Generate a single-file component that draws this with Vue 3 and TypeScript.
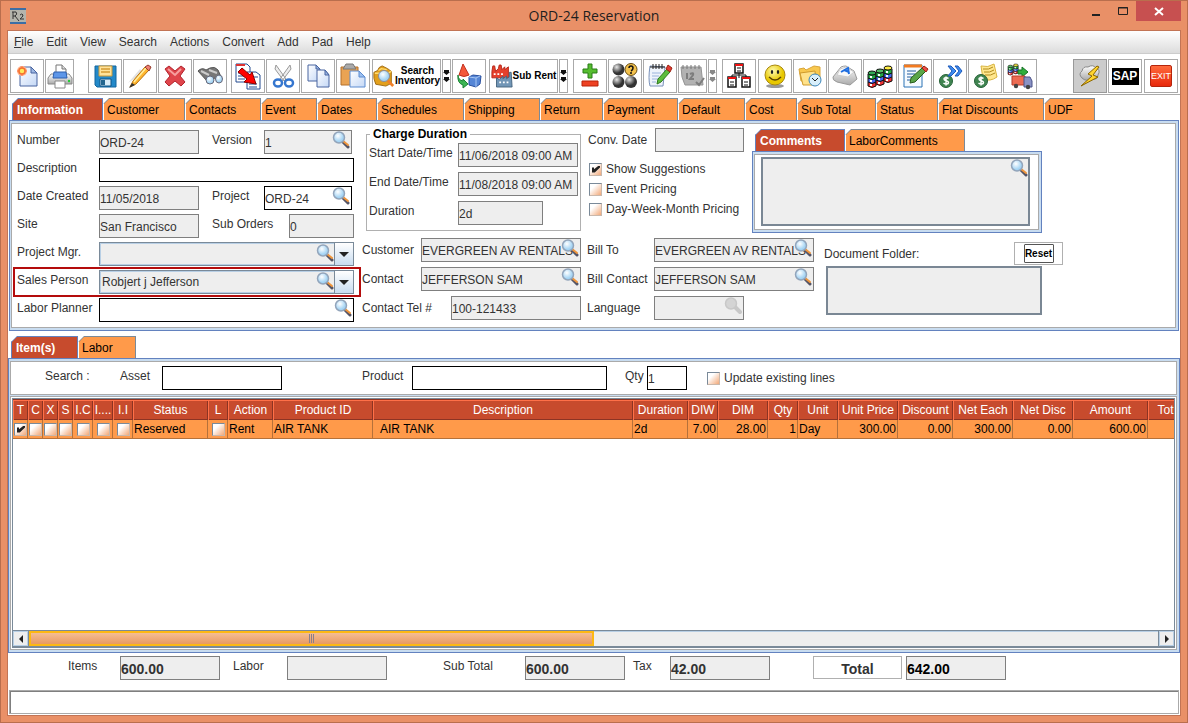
<script setup lang="ts">
import { reactive, ref } from 'vue'

interface Tab { label: string; width: number }
interface Tool { name: string; title: string; size?: string; lead?: number; caption?: string[] }
interface Column { title: string; width: number; kind?: 'check' | 'num' | 'text'; value?: string | boolean }

const menus = ['File', 'Edit', 'View', 'Search', 'Actions', 'Convert', 'Add', 'Pad', 'Help']

const tabs: Tab[] = [
  { label: 'Information', width: 91 }, { label: 'Customer', width: 82 }, { label: 'Contacts', width: 76 },
  { label: 'Event', width: 56 }, { label: 'Dates', width: 60 }, { label: 'Schedules', width: 87 },
  { label: 'Shipping', width: 76 }, { label: 'Return', width: 63 }, { label: 'Payment', width: 75 },
  { label: 'Default', width: 67 }, { label: 'Cost', width: 52 }, { label: 'Sub Total', width: 79 },
  { label: 'Status', width: 62 }, { label: 'Flat Discounts', width: 106 }, { label: 'UDF', width: 51 },
]
const commentTabs: Tab[] = [{ label: 'Comments', width: 90 }, { label: 'LaborComments', width: 120 }]
const lineTabs: Tab[] = [{ label: 'Item(s)', width: 67 }, { label: 'Labor', width: 58 }]
const activeTab = ref('Information')
const activeComment = ref('Comments')
const activeLine = ref('Item(s)')

const order = reactive({
  number: 'ORD-24', version: '1', description: '', created: '11/05/2018', project: 'ORD-24',
  site: 'San Francisco', subOrders: '0', manager: '', sales: 'Robjert j Jefferson', planner: '',
  start: '11/06/2018 09:00 AM', end: '11/08/2018 09:00 AM', duration: '2d', convDate: '',
  suggestions: true, eventPricing: false, dwmPricing: false,
  customer: 'EVERGREEN AV RENTALS', contact: 'JEFFERSON SAM', tel: '100-121433',
  billTo: 'EVERGREEN AV RENTALS', billContact: 'JEFFERSON SAM', language: '',
  comments: '', folder: '', asset: '', product: '', qty: '1', updateLines: false,
  items: '600.00', labor: '', subTotal: '600.00', tax: '42.00', total: '642.00',
})

const columns = reactive<Column[]>([
  { title: 'T', width: 15, kind: 'check', value: true }, { title: 'C', width: 15, kind: 'check', value: false },
  { title: 'X', width: 15, kind: 'check', value: false }, { title: 'S', width: 15, kind: 'check', value: false },
  { title: 'I.C', width: 20, kind: 'check', value: false }, { title: 'I....', width: 20, kind: 'check', value: false },
  { title: 'I.I', width: 20, kind: 'check', value: false }, { title: 'Status', width: 75, value: 'Reserved' },
  { title: 'L', width: 20, kind: 'check', value: false }, { title: 'Action', width: 45, value: 'Rent' },
  { title: 'Product ID', width: 100, value: 'AIR TANK' }, { title: 'Description', width: 260, value: '\u00a0 AIR TANK' },
  { title: 'Duration', width: 55, value: '2d' }, { title: 'DIW', width: 30, kind: 'num', value: '7.00' },
  { title: 'DIM', width: 50, kind: 'num', value: '28.00' }, { title: 'Qty', width: 30, kind: 'num', value: '1' },
  { title: 'Unit', width: 40, value: 'Day' }, { title: 'Unit Price', width: 60, kind: 'num', value: '300.00' },
  { title: 'Discount', width: 55, kind: 'num', value: '0.00' }, { title: 'Net Each', width: 60, kind: 'num', value: '300.00' },
  { title: 'Net Disc', width: 60, kind: 'num', value: '0.00' }, { title: 'Amount', width: 75, kind: 'num', value: '600.00' },
  { title: 'Tot', width: 35, value: '' },
])

const tools: Tool[] = [
  { name: 'new', title: 'New' }, { name: 'print', title: 'Print', size: 'narrow' },
  { name: 'save', title: 'Save', lead: 13 }, { name: 'pencil', title: 'Edit' }, { name: 'cross', title: 'Delete' },
  { name: 'binoculars', title: 'Find' }, { name: 'transfer', title: 'Convert', lead: 3 }, { name: 'cut', title: 'Cut' },
  { name: 'copy', title: 'Copy' }, { name: 'paste', title: 'Paste' },
  { name: 'box', title: 'Search Inventory', size: 'wide', lead: 1, caption: ['Search', 'Inventory'] },
  { name: 'more', title: 'More inventory', size: 'slim' }, { name: 'shapes', title: 'Substitute' },
  { name: 'factory', title: 'Sub Rent', size: 'wide', lead: 2, caption: ['Sub Rent'] },
  { name: 'more', title: 'More sub rent', size: 'slim' },
  { name: 'plusminus', title: 'Add or remove', lead: 4 }, { name: 'balls', title: 'Status' }, { name: 'note', title: 'Notes' },
  { name: 'calendar', title: 'Calendar', size: 'narrow' }, { name: 'moregrey', title: 'More dates', size: 'slim' },
  { name: 'tree', title: 'Hierarchy', lead: 4 }, { name: 'smile', title: 'Contact', lead: 1 },
  { name: 'folder', title: 'History' }, { name: 'key', title: 'Keys' }, { name: 'barrels', title: 'Stock' },
  { name: 'form', title: 'Edit form' }, { name: 'payout', title: 'Payment' }, { name: 'bill', title: 'Invoice' },
  { name: 'truck', title: 'Ship' },
]
const endTools: Tool[] = [
  { name: 'flash', title: 'Quick', size: 'pressed' }, { name: 'sap', title: 'SAP' }, { name: 'exit', title: 'Exit', lead: 1 },
]

const barrel = (x: number, y: number, top: string): string =>
  ['#e33', '#46e', '#2a4'].map((c, i) => `<path d="M${x} ${y + 13 - i * 4}v4q4 3 8 0v-4q-4 2-8 0z" fill="${c}" stroke="#111"/><path d="M${x + 3} ${y + 15 - i * 4}v2" stroke="#fff" stroke-width="2"/>`).join('') +
  `<ellipse cx="${x + 4}" cy="${y + 4}" rx="4" ry="2" fill="${top}" stroke="#111"/>`
const coin = '<circle cx="8" cy="17" r="6.500" fill="#3f8450" stroke="#266238"/><path d="M10.500 14.500q-4-2-4.500.5c0 2 4.500 1.500 4.500 3.500s-3 2-5 .6M8 12.500v9" fill="none" stroke="#fff" stroke-width="1.500"/>'

const icons: Record<string, string> = {
  new: '<path d="M5 3h11l6 6v13H5z" fill="url(#gPaper)" stroke="#4864a0"/><path d="M16 3v6h6z" fill="#9db8e4" stroke="#4864a0"/><circle cx="7" cy="7" r="5" fill="#ffb08a"/><path d="M7 2v10M2 7h10" stroke="#ff7a4a"/><circle cx="7" cy="7" r="3" fill="#ffe95a" stroke="#f5702f" stroke-width="1.500"/>',
  print: '<path d="M8 10V1h6l4 4v5" fill="#fff" stroke="#777"/><path d="M14 1v4h4" fill="#ddd" stroke="#777"/><path d="M3 10h18l3 4v6H0v-6z" fill="url(#gSilver)" stroke="#888"/><path d="M6 8h12l1 6H5z" fill="#5d96e8" stroke="#2d5fae"/><path d="M7 17h10v7H7z" fill="#fff" stroke="#888"/><circle cx="21" cy="17" r="1.200" fill="#2c3"/>',
  save: '<path d="M2 2h21v21H4l-2-2z" fill="#2389c9" stroke="#12659d"/><path d="M6 2h13v10H6z" fill="#ffe39a" stroke="#c99a3a"/><path d="M8 5h9M8 8h9" stroke="#d49c34" stroke-width="1.500"/><path d="M7 15h11v7H7z" fill="#d8ecf8" stroke="#0e5283"/><path d="M8 16h4v5H8z" fill="#23668f"/>',
  pencil: '<path d="M0 19L12 5l3 4z" fill="#e2e2e2"/><path d="M2 23l3-6L17 3l4 3L8 20z" fill="#ffb52e" stroke="#b8720f"/><path d="M6 18L18 4" stroke="#fff0a0" stroke-width="1.500"/><path d="M17 3l3-2 3 2-2 4z" fill="#ef7f72" stroke="#953b2d"/><path d="M1 24l3-5 3 2z" fill="#333"/>',
  cross: '<path d="M2 5l4-3 6 5 6-5 4 3-5 7 5 6-4 4-6-5-6 5-4-4 5-6z" fill="#df454b" stroke="#b2232d"/><path d="M5 5l7 6 6-6" fill="none" stroke="#f7a0a0" stroke-width="2"/>',
  binoculars: '<path d="M0 7q4-4 8-1l4-2q5-2 8 2l4 9-10-1-5 3z" fill="#777" stroke="#555"/><path d="M3 7l8 4m0-5l8 3" stroke="#ccc" stroke-width="2"/><ellipse cx="12" cy="16" rx="4" ry="4" fill="url(#gLens)" stroke="#667"/><ellipse cx="21" cy="15" rx="3.500" ry="4" fill="url(#gLens)" stroke="#667"/>',
  transfer: '<path d="M0 0h11l3 3v15H0z" fill="#fff" stroke="#224a90"/><path d="M11 8h9l4 3v14H11z" fill="#fff" stroke="#224a90"/><path d="M0 0h9v2H0z" fill="#d33"/><path d="M2 9h5M2 12h7M2 15h7M13 20h8M13 23h8M18 13h4" stroke="#234d94"/><path d="M2 8l4-4 8 7 2-3 4 12-12-2 3-3z" fill="#f00" stroke="#800"/>',
  cut: '<path d="M5 1l10 14-2 2L4 5zM19 1L9 15l2 2 9-12z" fill="#eee" stroke="#999"/><ellipse cx="7" cy="19" rx="4" ry="3.500" fill="#fff" stroke="#3576cf" stroke-width="2.500"/><ellipse cx="18" cy="19" rx="4" ry="3.500" fill="#fff" stroke="#3576cf" stroke-width="2.500"/>',
  copy: '<path d="M2 1h8l4 4v12H2z" fill="url(#gPaper)" stroke="#4864a0"/><path d="M10 1v4h4z" fill="#9db8e4" stroke="#4864a0"/><path d="M11 6h8l4 5v12H11z" fill="url(#gPaper)" stroke="#4864a0"/><path d="M19 6v5h4z" fill="#9db8e4" stroke="#4864a0"/>',
  paste: '<path d="M0 3h17v18H0z" fill="#e9a353" stroke="#b3702c"/><path d="M5 0h7l3 5H2z" fill="#aaa" stroke="#777"/><path d="M9 7h9l6 6v10H9z" fill="url(#gPaper)" stroke="#5c8cd0"/><path d="M18 7v6h6z" fill="#9dc0f0" stroke="#5c8cd0"/>',
  box: '<path d="M1 8l4-2q1-4 5-5l6 3 4 3v13l-6 3-11-2q-3-6-2-13z" fill="#e2a01c" stroke="#9c6810"/><path d="M2 9h14l4-2M6 6l3-2 6 1" fill="none" stroke="#ffdc70" stroke-width="1.500"/><circle cx="12" cy="12" r="6" fill="url(#gLens)" stroke="#889"/><path d="M16 17l6 6" stroke="#f08028" stroke-width="3"/>',
  factory: '<path d="M1 14V7l1-6h2l1 6 3-3 1-4h2l1 5 3-3v3l4-3v12z" fill="#e6402c" stroke="#b52316"/><path d="M6 24V14l3 2 4-4v3l4-3v3l3-2V8h2l1 16z" fill="#7296b6" stroke="#44627e"/><path d="M9 19h2m2 0h2m2 0h2M3 10h2m2 0h2m2 0h2" stroke="#fff" stroke-width="2"/>',
  shapes: '<path d="M6 0l6 11q-5 3-10 0z" fill="#f4583a" stroke="#c2301e"/><path d="M1 11q0 5 5 6v-2l5 5-5 4v-3q-6-2-5-10z" fill="#3db554" stroke="#1c8234"/><path d="M12 13l4-2 8 1-1 8-4 3-7-2z" fill="#5586d6" stroke="#284f9e"/><path d="M12 13l7 1 4-2m-4 2v9" fill="none" stroke="#a8c6f2"/>',
  plusminus: '<path d="M10 0h4v5h5v4h-5v5h-4V9H5V5h5z" fill="#56bd30" stroke="#287c16"/><path d="M4 17h16v5H4z" fill="#ee4123" stroke="#b92208"/>',
  balls: '<circle cx="5.500" cy="5.500" r="6" fill="url(#gBall)"/><circle cx="18" cy="5.500" r="6" fill="#f4c24c" stroke="#654a12"/><circle cx="5.500" cy="18" r="6" fill="url(#gBall)"/><circle cx="18" cy="18" r="6" fill="url(#gBall)"/><path d="M16 4q0-2 2-2t2 2-2 3m0 1v2" fill="none" stroke="#111" stroke-width="1.500"/>',
  note: '<path d="M2 2l15 1-2 19H2q-2-7 0-20z" fill="#eef3fb" stroke="#7a92ba"/><path d="M2 3h15M5 0v5m3-5v5m3-5v5m3-5v5" stroke="#222"/><path d="M4 9h9M4 12h7M4 15h6M4 18h4" stroke="#9bb4dc"/><path d="M9 20l1-5L19 5l3 3-9 10z" fill="#5cbd3b" stroke="#2e7a1c"/><path d="M18 5l2-4 4 3-2 4z" fill="#e33b33" stroke="#921"/>',
  calendar: '<path d="M0 3h20l2 18H4q-4-7-4-18z" fill="#b2b2b2" stroke="#959595"/><path d="M2 1v4m4-4v4m4-4v4m4-4v4m4-4v4" stroke="#777"/><path d="M6 9v6m3-5q4-2 3 1l-3 4h4m2 3l3 3 5-7" fill="none" stroke="#7d7d7d" stroke-width="2"/>',
  tree: '<path d="M12 9v5M5 14v-3h14v3" fill="none" stroke="#111"/><g fill="#fff" stroke="#111" stroke-width="1.500"><path d="M8 0h8v9H8zM1 13h8v10H1zM15 13h8v10h-8z"/></g><path d="M8 1h8M1 14h8M15 14h8" stroke="#e11" stroke-width="2"/><path d="M10 4h4m-4 3h4M3 18h4m-4 3h4m10-3h4m-4 3h4" stroke="#111"/>',
  smile: '<ellipse cx="12" cy="22" rx="9" ry="2" fill="#999"/><circle cx="12" cy="11" r="10" fill="url(#gSun)" stroke="#a88812"/><ellipse cx="9" cy="8" rx="1.200" ry="2" fill="#222"/><ellipse cx="15" cy="8" rx="1.200" ry="2" fill="#222"/><path d="M6 13q6 6 12 0" fill="none" stroke="#5c4300" stroke-width="1.500"/>',
  folder: '<path d="M1 5l5-1 2 2 8-4 6 1v14H3z" fill="#f8c84e" stroke="#d9a53a"/><path d="M2 9l15-2 1 14H5z" fill="#ffe28a" stroke="#cf9b2c"/><circle cx="17" cy="16" r="6" fill="#d8effb" stroke="#3a85ba"/><path d="M14 14l3 3 3-3" fill="none" stroke="#222"/>',
  key: '<path d="M0 13L8 3q2-1 5-1l8 5 3 8-7 6-13-3q-5-2-4-5z" fill="url(#gSilver)" stroke="#999"/><path d="M7 5l6-2 8 5-6 5-11-2z" fill="#fafafa" stroke="#ccc"/><path d="M8 8l7-4 1 6M11 6l5 2" fill="none" stroke="#1f6ee0" stroke-width="2"/>',
  barrels: barrel(0, 5, '#3a5') + barrel(8, 3, '#5b6') + barrel(16, 0, '#fe4'),
  form: '<path d="M1 1h18v22H1z" fill="#f6fbff" stroke="#2a72b5"/><path d="M1 2h18" stroke="#f27a20" stroke-width="3"/><path d="M4 7h9M4 10h8M4 13h6M4 16h3" stroke="#225c9e"/><path d="M7 19l1-5L19 4l4 3-11 11z" fill="#5aa548" stroke="#285c1c"/><path d="M19 4l2-2 4 3-2 3z" fill="#ec4e43" stroke="#921"/>',
  payout: coin + '<path d="M10 2h3l5 5-5 5h-3l4-5zM17 2h3l4 5-4 5h-3l4-5z" fill="#3f8cf0" stroke="#1d59b8"/>',
  bill: '<path d="M8 2q7 2 13-2l3 13q-7 5-14 2z" fill="#ffe78e" stroke="#d8b440"/><path d="M10 5q6 1 10-2m-9 5q6 1 10-2m-9 5q6 1 10-2" fill="none" stroke="#b08a1c"/>' + coin,
  truck: '<g transform="scale(.6)">' + barrel(0, 0, '#5b6') + barrel(9, -2, '#fe4') + '</g><path d="M10 6h4V3l6 5-6 5v-3h-4z" fill="#2fae3c" stroke="#157224"/><path d="M4 12h13v9H4z" fill="#ec6b52" stroke="#b53a28"/><path d="M16 13h6l2 4v6h-8z" fill="#8a92c4" stroke="#4a5288"/><circle cx="8" cy="22" r="2.200" fill="#444"/><circle cx="20" cy="23" r="2.200" fill="#444"/>',
  flash: '<path d="M4 14q-4-4 0-7 1-5 6-4 5-3 8 1 5 2 2 7 0 5-6 4-6 3-10-1z" fill="url(#gSilver)" stroke="#888"/><path d="M19 2l-9 8 4 2-11 10 17-9-5-2 6-8z" fill="#ffd42e" stroke="#8a6500"/>',
}
</script>

<template>
  <div class="window">
    <svg class="defs" aria-hidden="true">
      <defs>
        <linearGradient id="gPaper" x2="1" y2="1"><stop stop-color="#fff" /><stop offset="1" stop-color="#c4d8f6" /></linearGradient>
        <linearGradient id="gSilver" x2="0" y2="1"><stop stop-color="#fff" /><stop offset="1" stop-color="#aaa" /></linearGradient>
        <radialGradient id="gLens" cx=".4" cy=".35"><stop stop-color="#fff" /><stop offset="1" stop-color="#a4d4f4" /></radialGradient>
        <radialGradient id="gBall" cx=".35" cy=".3"><stop stop-color="#e8e8e8" /><stop offset="1" stop-color="#333" /></radialGradient>
        <radialGradient id="gSun" cx=".4" cy=".3"><stop stop-color="#fffbb0" /><stop offset="1" stop-color="#e8c800" /></radialGradient>
        <symbol id="lens" viewBox="0 0 18 18">
          <path d="M11 11l5 5" stroke="#556" stroke-width="3" stroke-linecap="round" />
          <path d="M11 10l5 4" stroke="#f0963c" stroke-width="2" stroke-linecap="round" />
          <circle cx="7" cy="6.500" r="5.500" fill="url(#gLens)" stroke="#93a5bb" stroke-width="1.500" />
        </symbol>
        <symbol id="lensOff" viewBox="0 0 18 18">
          <path d="M11 10l5 5" stroke="#c8c8c8" stroke-width="4" stroke-linecap="round" />
          <circle cx="7" cy="6.500" r="5.500" fill="#d4d4d4" stroke="#c8c8c8" stroke-width="1.500" />
        </symbol>
      </defs>
    </svg>

    <header class="titlebar">
      <svg class="app-icon" viewBox="0 0 16 16">
        <rect width="16" height="16" fill="#b4b4ac" />
        <path d="M0 1h16M0 15h16" stroke="#3c6ea5" stroke-width="2" />
        <path d="M3 4v7M2 4h4q2 2-1 4H3m2 0l4 5M10 7q2-2 3 0 0 2-3 4h4" fill="none" stroke="#333" />
      </svg>
      <h1>ORD-24 Reservation</h1>
      <div class="win-controls">
        <button class="win-btn" aria-label="Minimize"><svg viewBox="0 0 12 12"><path d="M2 10h8" stroke="#222" stroke-width="2" /></svg></button>
        <button class="win-btn" aria-label="Maximize"><svg viewBox="0 0 12 12"><path d="M1.500 2.500h9v7h-9zM1 3h10" fill="none" stroke="#222" /></svg></button>
        <button class="win-btn close" aria-label="Close"><svg viewBox="0 0 12 12"><path d="M2 3l8 7M10 3l-8 7" stroke="#fff" stroke-width="2" /></svg></button>
      </div>
    </header>

    <div class="client">
      <nav class="menubar">
        <button v-for="m in menus" :key="m" class="menu"><u v-if="m === 'File'">F</u>{{ m === 'File' ? 'ile' : m }}</button>
      </nav>

      <div class="toolbar">
        <button v-for="(t, i) in tools" :key="i" class="tool" :class="t.size" :style="{ marginLeft: (t.lead ?? 0) + 'px' }" :aria-label="t.title">
          <svg v-if="t.name === 'more' || t.name === 'moregrey'" viewBox="0 0 7 14" class="arrows" :class="{ grey: t.name === 'moregrey' }">
            <path d="M1 1h5v2H1zM0 3h7L3.500 6zM1 8h5v2H1zM0 10h7l-3.500 3z" />
          </svg>
          <svg v-else viewBox="0 0 24 24" class="glyph" v-html="icons[t.name]"></svg>
          <span v-if="t.caption" class="caption"><span v-for="line in t.caption" :key="line">{{ line }}</span></span>
        </button>
        <div class="tools-end">
          <button v-for="t in endTools" :key="t.name" class="tool" :class="t.size" :style="{ marginLeft: (t.lead ?? 0) + 'px' }" :aria-label="t.title">
            <span v-if="t.name === 'sap'" class="sap">SAP</span>
            <span v-else-if="t.name === 'exit'" class="exit">EXIT</span>
            <svg v-else viewBox="0 0 24 24" class="glyph" v-html="icons[t.name]"></svg>
          </button>
        </div>
      </div>

      <div class="pane-info">
        <div class="tabs" role="tablist">
          <button v-for="t in tabs" :key="t.label" role="tab" class="tab" :class="{ active: t.label === activeTab }" :style="{ width: t.width + 'px' }" @click="activeTab = t.label"><span>{{ t.label }}</span></button>
        </div>
        <div class="frame">
          <form class="inner form" @submit.prevent>
            <div class="left">
              <div class="row">
                <label for="number" class="w82">Number</label><input id="number" v-model="order.number" class="field w100" readonly />
                <label for="version" class="second w52">Version</label>
                <div class="lookup w88"><input id="version" v-model="order.version" class="field" readonly /><button class="find" type="button" aria-label="Find version"><svg><use href="#lens" /></svg></button></div>
              </div>
              <div class="row"><label for="desc" class="w82">Description</label><input id="desc" v-model="order.description" class="field edit grow" /></div>
              <div class="row">
                <label for="created" class="w82">Date Created</label><input id="created" v-model="order.created" class="field w100" readonly />
                <label for="project" class="second w52">Project</label>
                <div class="lookup w88"><input id="project" v-model="order.project" class="field edit" /><button class="find" type="button" aria-label="Find project"><svg><use href="#lens" /></svg></button></div>
              </div>
              <div class="row">
                <label for="site" class="w82">Site</label><input id="site" v-model="order.site" class="field w100" readonly />
                <label for="suborders" class="second w77">Sub Orders</label><input id="suborders" v-model="order.subOrders" class="field w65" readonly />
              </div>
              <div class="row">
                <label for="manager" class="w82">Project Mgr.</label>
                <div class="combo"><select id="manager" v-model="order.manager"><option value=""></option></select><span class="drop"></span><button class="find" type="button" aria-label="Find project manager"><svg><use href="#lens" /></svg></button></div>
              </div>
              <div class="row marked">
                <label for="sales" class="w82">Sales Person</label>
                <div class="combo"><select id="sales" v-model="order.sales"><option>Robjert j Jefferson</option></select><span class="drop"></span><button class="find" type="button" aria-label="Find sales person"><svg><use href="#lens" /></svg></button></div>
              </div>
              <div class="row">
                <label for="planner" class="w82">Labor Planner</label>
                <div class="lookup grow"><input id="planner" v-model="order.planner" class="field edit" /><button class="find" type="button" aria-label="Find labor planner"><svg><use href="#lens" /></svg></button></div>
              </div>
            </div>

            <div class="right">
              <div class="upper">
                <fieldset class="charge">
                  <legend>Charge Duration</legend>
                  <div class="row"><label for="start" class="w89">Start Date/Time</label><input id="start" v-model="order.start" class="field w120" readonly /></div>
                  <div class="row"><label for="end" class="w89">End Date/Time</label><input id="end" v-model="order.end" class="field w120" readonly /></div>
                  <div class="row"><label for="duration" class="w89">Duration</label><input id="duration" v-model="order.duration" class="field w85" readonly /></div>
                </fieldset>
                <div class="options">
                  <div class="row conv"><label for="conv" class="w67">Conv. Date</label><input id="conv" v-model="order.convDate" class="field grow" readonly /></div>
                  <label class="tick"><input v-model="order.suggestions" type="checkbox" />Show Suggestions</label>
                  <label class="tick"><input v-model="order.eventPricing" type="checkbox" />Event Pricing</label>
                  <label class="tick"><input v-model="order.dwmPricing" type="checkbox" />Day-Week-Month Pricing</label>
                </div>
                <div class="comments">
                  <div class="tabs" role="tablist">
                    <button v-for="t in commentTabs" :key="t.label" type="button" role="tab" class="tab" :class="{ active: t.label === activeComment }" :style="{ width: t.width + 'px' }" @click="activeComment = t.label"><span>{{ t.label }}</span></button>
                  </div>
                  <div class="frame">
                    <div class="inner note-pad">
                      <textarea v-model="order.comments" aria-label="Comments" readonly></textarea>
                      <button class="find" type="button" aria-label="Open comments"><svg><use href="#lens" /></svg></button>
                    </div>
                  </div>
                </div>
              </div>

              <div class="lower">
                <div class="people">
                  <div class="row"><label for="customer" class="w59">Customer</label><div class="lookup grow"><input id="customer" v-model="order.customer" class="field" readonly /><button class="find" type="button" aria-label="Find customer"><svg><use href="#lens" /></svg></button></div></div>
                  <div class="row"><label for="contact" class="w59">Contact</label><div class="lookup grow"><input id="contact" v-model="order.contact" class="field" readonly /><button class="find" type="button" aria-label="Find contact"><svg><use href="#lens" /></svg></button></div></div>
                  <div class="row"><label for="tel" class="w89">Contact Tel #</label><input id="tel" v-model="order.tel" class="field grow" readonly /></div>
                </div>
                <div class="billing">
                  <div class="row"><label for="billto" class="w67">Bill To</label><div class="lookup grow"><input id="billto" v-model="order.billTo" class="field" readonly /><button class="find" type="button" aria-label="Find bill to"><svg><use href="#lens" /></svg></button></div></div>
                  <div class="row"><label for="billcontact" class="w67">Bill Contact</label><div class="lookup grow"><input id="billcontact" v-model="order.billContact" class="field" readonly /><button class="find" type="button" aria-label="Find bill contact"><svg><use href="#lens" /></svg></button></div></div>
                  <div class="row"><label for="language" class="w67">Language</label><div class="lookup w90"><input id="language" v-model="order.language" class="field" readonly /><button class="find" type="button" disabled aria-label="Find language"><svg><use href="#lensOff" /></svg></button></div></div>
                </div>
                <div class="document">
                  <div class="doc-head"><label for="folder">Document Folder:</label><div class="reset-box"><button type="button" class="reset">Reset</button></div></div>
                  <textarea id="folder" v-model="order.folder" readonly></textarea>
                </div>
              </div>
            </div>
          </form>
        </div>
      </div>

      <div class="pane-lines">
        <div class="tabs" role="tablist">
          <button v-for="t in lineTabs" :key="t.label" role="tab" class="tab" :class="{ active: t.label === activeLine }" :style="{ width: t.width + 'px' }" @click="activeLine = t.label"><span>{{ t.label }}</span></button>
        </div>
        <div class="frame lines">
          <div class="inner search">
            <span class="w75">Search :</span>
            <label for="asset" class="w42">Asset</label><input id="asset" v-model="order.asset" class="field edit w120" />
            <label for="product" class="w50 product">Product</label><input id="product" v-model="order.product" class="field edit w195" />
            <label for="qty" class="w22 qty">Qty</label><input id="qty" v-model="order.qty" class="field edit w40" />
            <label class="tick update"><input v-model="order.updateLines" type="checkbox" />Update existing lines</label>
          </div>
          <div class="inner grid-box">
            <div class="grid">
              <div class="viewport">
                <table>
                  <colgroup><col v-for="c in columns" :key="c.title" :style="{ width: c.width + 'px' }" /></colgroup>
                  <thead><tr><th v-for="c in columns" :key="c.title" scope="col">{{ c.title }}</th></tr></thead>
                  <tbody>
                    <tr>
                      <td v-for="c in columns" :key="c.title" :class="c.kind">
                        <input v-if="c.kind === 'check'" v-model="c.value" type="checkbox" :aria-label="c.title" />
                        <template v-else>{{ c.value }}</template>
                      </td>
                    </tr>
                  </tbody>
                </table>
              </div>
              <div class="scroll">
                <button class="arrow" aria-label="Scroll left"><svg viewBox="0 0 10 10"><path d="M7 1v8L3 5z" fill="#222" /></svg></button>
                <div class="track"><div class="thumb"><i></i><i></i><i></i></div></div>
                <button class="arrow" aria-label="Scroll right"><svg viewBox="0 0 10 10"><path d="M3 1v8l4-4z" fill="#222" /></svg></button>
              </div>
            </div>
          </div>
        </div>
      </div>

      <div class="totals">
        <label for="t-items" class="w52">Items</label><input id="t-items" v-model="order.items" class="field w100" readonly />
        <label for="t-labor" class="w54 t-labor">Labor</label><input id="t-labor" v-model="order.labor" class="field w100" readonly />
        <label for="t-sub" class="w82 t-sub">Sub Total</label><input id="t-sub" v-model="order.subTotal" class="field w100" readonly />
        <label for="t-tax" class="w37 t-tax">Tax</label><input id="t-tax" v-model="order.tax" class="field w100" readonly />
        <label for="t-total" class="t-total">Total</label><input id="t-total" v-model="order.total" class="field w100 strong" readonly />
      </div>
      <div class="statusbar" role="status"></div>
    </div>
  </div>
</template>

<style>
body { margin: 0; }
</style>

<style scoped>
.window, .window * { box-sizing: border-box; }
.window {
  min-height: 100vh; display: flex; flex-direction: column; padding: 0 6px 6px;
  border: 1px solid #b96e4d; background: #e99067; color: #333;
  font: 12px/20px "Liberation Sans", Arial, sans-serif;
}
.defs { position: absolute; width: 0; height: 0; }
button { margin: 0; padding: 0; border: 0; background: none; color: inherit; font: inherit; }
input, select, textarea { margin: 0; color: inherit; font: inherit; border-radius: 0; }
input:focus, select:focus, textarea:focus { outline: none; }

.titlebar { display: grid; grid-template-columns: 1fr auto 1fr; align-items: center; height: 29px; }
.app-icon { width: 16px; height: 16px; margin-left: 3px; }
h1 { margin: 0; font: 14px/20px "Open Sans", "Noto Sans", sans-serif; color: #1e1e1e; }
.win-controls { justify-self: end; align-self: start; display: flex; }
.win-btn { width: 27px; height: 20px; display: flex; align-items: center; justify-content: center; }
.win-btn svg { width: 12px; height: 12px; }
.close { width: 45px; background: #c75050; }

.client { flex: 1; display: flex; flex-direction: column; background: #fff; border: 1px solid #c27455; }
.menubar { display: flex; gap: 13px; height: 23px; padding: 0 6px; background: linear-gradient(#fff, #dcdcdc); border-bottom: 1px solid #ccc; }
.menu { white-space: nowrap; }

.toolbar { display: flex; gap: 1px; height: 41px; padding: 5px 2px 1px; border-bottom: 1px solid #aaa; }
.tool { flex: none; width: 34px; height: 34px; display: flex; align-items: center; justify-content: center; border: 1px solid #aaa; background: #fff; }
.glyph { flex: none; width: 24px; height: 24px; overflow: visible; }
.narrow { width: 29px; }
.wide { width: 69px; }
.wide .glyph { width: 22px; }
.slim { width: 9px; }
.pressed { background: #ccc; border-color: #999; }
.arrows { width: 7px; height: 14px; fill: #111; }
.arrows.grey { fill: #888; }
.caption { display: flex; flex-direction: column; align-items: center; font: bold 10px/10px "Liberation Sans", Arial, sans-serif; color: #000; white-space: nowrap; }
.tools-end { margin-left: auto; display: flex; gap: 1px; }
.sap { width: 27px; background: #000; color: #fff; font: bold 12px/17px "Liberation Sans", Arial, sans-serif; }
.exit { width: 22px; border-radius: 2px; border: 1px solid #b5240c; background: linear-gradient(#ff6a3c, #e8290c); color: #fff; font: 9px/20px "Liberation Sans", Arial, sans-serif; }

.pane-info { padding: 3px 1px 0; }
.tabs { display: flex; padding-left: 3px; height: 22px; }
.tab { flex: none; height: 22px; text-align: left; color: #000; background: #7a8a99; clip-path: polygon(6px 0, 100% 0, 100% 100%, 0 100%, 0 6px); border-left: 1px solid #fff; }
.tab span { display: block; height: 21px; margin: 1px 1px 0 0; padding-left: 3px; line-height: 22px; background: #ff9a4a; clip-path: polygon(5px 0, 100% 0, 100% 100%, 0 100%, 0 5px); white-space: nowrap; }
.tab.active { background: #6382bf; border-left-color: #6382bf; font-weight: bold; color: #fff; }
.tab.active span { background: #c74b2d; padding-left: 4px; }
.frame { border: 1px solid #6382bf; padding: 2px 2px 2px 1px; background: #c8dcf0; }
.inner { background: #fff; border: 1px solid #aaa; }

.form { display: flex; gap: 8px; height: 205px; padding: 4px 0 0 5px; }
.left { flex: none; width: 337px; display: flex; flex-direction: column; gap: 4px; padding-top: 2px; }
.row { display: flex; height: 24px; align-items: flex-start; position: relative; }
.row > label { flex: none; white-space: nowrap; }
.second { margin-left: 13px; }
.field { height: 24px; min-width: 0; padding: 2px 0 0; border: 1px solid #7f7f7f; background: #eee; line-height: 20px; }
.edit { border-color: #000; background: #fff; }
.grow { flex: 1; }
.lookup { position: relative; display: flex; }
.lookup .field { width: 100%; }
.find { position: absolute; top: 1px; right: 2px; width: 18px; height: 18px; }
.find svg { display: block; width: 18px; height: 18px; }
.combo { position: relative; flex: 1; display: flex; height: 24px; border: 1px solid #7a8a99; background: #eee; box-shadow: inset 0 0 0 1px #b8cfe5; }
.combo select { flex: 1; appearance: none; border: 0; padding: 0 0 0 2px; background: none; }
.combo .find { right: 19px; }
.drop { position: absolute; right: 0; top: 0; width: 19px; height: 22px; border-left: 1px solid #7a8a99; background: linear-gradient(#fff, #c8dcf0); pointer-events: none; }
.drop::after { content: ""; position: absolute; left: 4px; top: 9px; border: 5px solid transparent; border-top-color: #222; border-bottom: 0; }
.marked::before { content: ""; position: absolute; inset: -3px -7px -3px -4px; border: 2px solid #b40c0c; pointer-events: none; }

.right { flex: 1; min-width: 0; }
.upper { display: flex; height: 110px; }
.charge { flex: none; width: 215px; height: 103px; margin: 0 7px 0 4px; padding: 1px 2px 0; border: 1px solid #b0b0b0; min-width: 0; }
.charge legend { padding: 0 3px; margin-left: 1px; height: 12px; font-weight: bold; line-height: 12px; color: #000; }
.charge .row { margin-bottom: 5px; top: 2px; }
.options { flex: none; width: 156px; margin-right: 8px; }
.conv { height: 31px; }
.conv label { padding-top: 2px; }
.tick { display: flex; align-items: center; gap: 4px; height: 20px; padding-left: 1px; white-space: nowrap; }
input[type="checkbox"] { appearance: none; flex: none; position: relative; width: 13px; height: 13px; margin: 0; border: 1px solid; border-color: #7a8a99 #c9b8ac #c9b8ac #7a8a99; background: linear-gradient(135deg, #fff 30%, #f2a878); }
input[type="checkbox"]:checked::after { content: ""; position: absolute; left: 2px; top: 2px; width: 8px; height: 7px; background: #222; clip-path: polygon(0 30%, 25% 30%, 25% 55%, 85% 0, 100% 0, 100% 30%, 35% 100%, 0 100%); }
.comments { flex: none; width: 290px; padding-top: 1px; }
.note-pad { position: relative; display: flex; height: 76px; padding: 2px 8px 3px 6px; }
.note-pad .find { top: 4px; right: 10px; }
textarea { display: block; resize: none; border: 2px solid #7a8794; background: #eee; }
.note-pad textarea { flex: 1; min-width: 0; }

.lower { display: flex; }
.lower .row { margin-bottom: 5px; }
.lower .row > label { padding-top: 2px; }
.people { flex: none; width: 219px; margin-right: 6px; }
.billing { flex: none; width: 227px; margin-right: 10px; }
.document { flex: none; width: 239px; }
.doc-head { display: flex; justify-content: space-between; height: 28px; padding-top: 4px; }
.doc-head label { padding-top: 2px; }
.reset-box { display: flex; justify-content: center; width: 49px; height: 23px; padding: 1px; border: 1px solid #b0b0b0; }
.reset { width: 30px; height: 19px; border: 1px solid #555; border-radius: 1px; color: #000; font: bold 10px/17px "Liberation Sans", Arial, sans-serif; }
.document textarea { width: 216px; height: 49px; margin-left: 2px; }

.pane-lines { flex: 1; display: flex; flex-direction: column; margin-top: 5px; }
.lines { flex: 1; display: flex; flex-direction: column; }
.search { flex: none; display: flex; height: 34px; padding: 4px 0 0 34px; }
.search .product { margin-left: 80px; }
.search .qty { margin-left: 18px; }
.search .update { margin-left: 19px; padding-top: 4px; }
.grid-box { flex: 1; display: flex; margin-top: 1px; padding: 1px; }
.grid { flex: 1; min-width: 0; display: flex; flex-direction: column; border: 1px solid #7a8a99; }
.viewport { flex: 1; overflow: hidden; }
table { width: 1170px; table-layout: fixed; border-collapse: collapse; color: #000; }
th, td { height: 20px; padding: 0; overflow: hidden; line-height: 18px; white-space: nowrap; }
th { font-weight: normal; color: #fff; background: #c74b2d; box-shadow: inset 1px 1px #ff7048, inset -1px -1px #8c3423; }
thead tr { border-top: 1px solid #8c3423; }
td { height: 19px; padding: 0 2px 0 1px; background: #ff9a4a; box-shadow: inset -1px -1px #b5713a; }
.num { text-align: right; }
td.check { padding: 0; text-align: center; }
.check input { display: block; margin: 0 auto; }
.scroll { display: flex; height: 17px; border-top: 1px solid #7a8a99; border-bottom: 1px solid #7a8a99; }
.arrow { width: 15px; display: flex; align-items: center; justify-content: center; background: #eee; border: 1px solid #b8cfe5; }
.arrow svg { width: 10px; height: 10px; }
.track { flex: 1; display: flex; background: #eee; border: 1px solid #7a8a99; border-width: 0 1px; box-shadow: inset 0 1px #b8cfe5; }
.thumb { width: 50%; display: flex; align-items: center; justify-content: center; gap: 1px; border: 2px solid #fdb813; background: linear-gradient(#f4bd95, #e99a60); }
.thumb i { width: 1px; height: 9px; background: #8a7f8a; }

.totals { flex: none; display: flex; height: 37px; padding: 3px 0 0 60px; }
.totals .field { font-size: 14px; font-weight: bold; padding-top: 1px; }
.totals .strong { margin-left: 4px; color: #000; }
.t-labor { margin-left: 13px; }
.t-sub { margin-left: 56px; }
.t-tax { margin-left: 8px; }
.t-total { width: 89px; height: 23px; margin-left: 43px; border: 1px solid #b0b0b0; text-align: center; font: bold 14px/24px "Liberation Sans", Arial, sans-serif; }
.statusbar { flex: none; height: 24px; margin: 0 1px 1px; border: 1px solid #aaa; box-shadow: inset 1px 1px #7f7f7f; }

.w22 { width: 22px; } .w37 { width: 37px; } .w40 { width: 40px; } .w42 { width: 42px; } .w50 { width: 50px; }
.w52 { width: 52px; } .w54 { width: 54px; } .w59 { width: 59px; } .w65 { width: 65px; } .w67 { width: 67px; }
.w75 { width: 75px; } .w77 { width: 77px; } .w82 { width: 82px; } .w85 { width: 85px; } .w88 { width: 88px; }
.w89 { width: 89px; } .w90 { width: 90px; } .w100 { width: 100px; } .w120 { width: 120px; } .w195 { width: 195px; }
.search > span, .search > label, .totals > label { flex: none; white-space: nowrap; }
</style>
